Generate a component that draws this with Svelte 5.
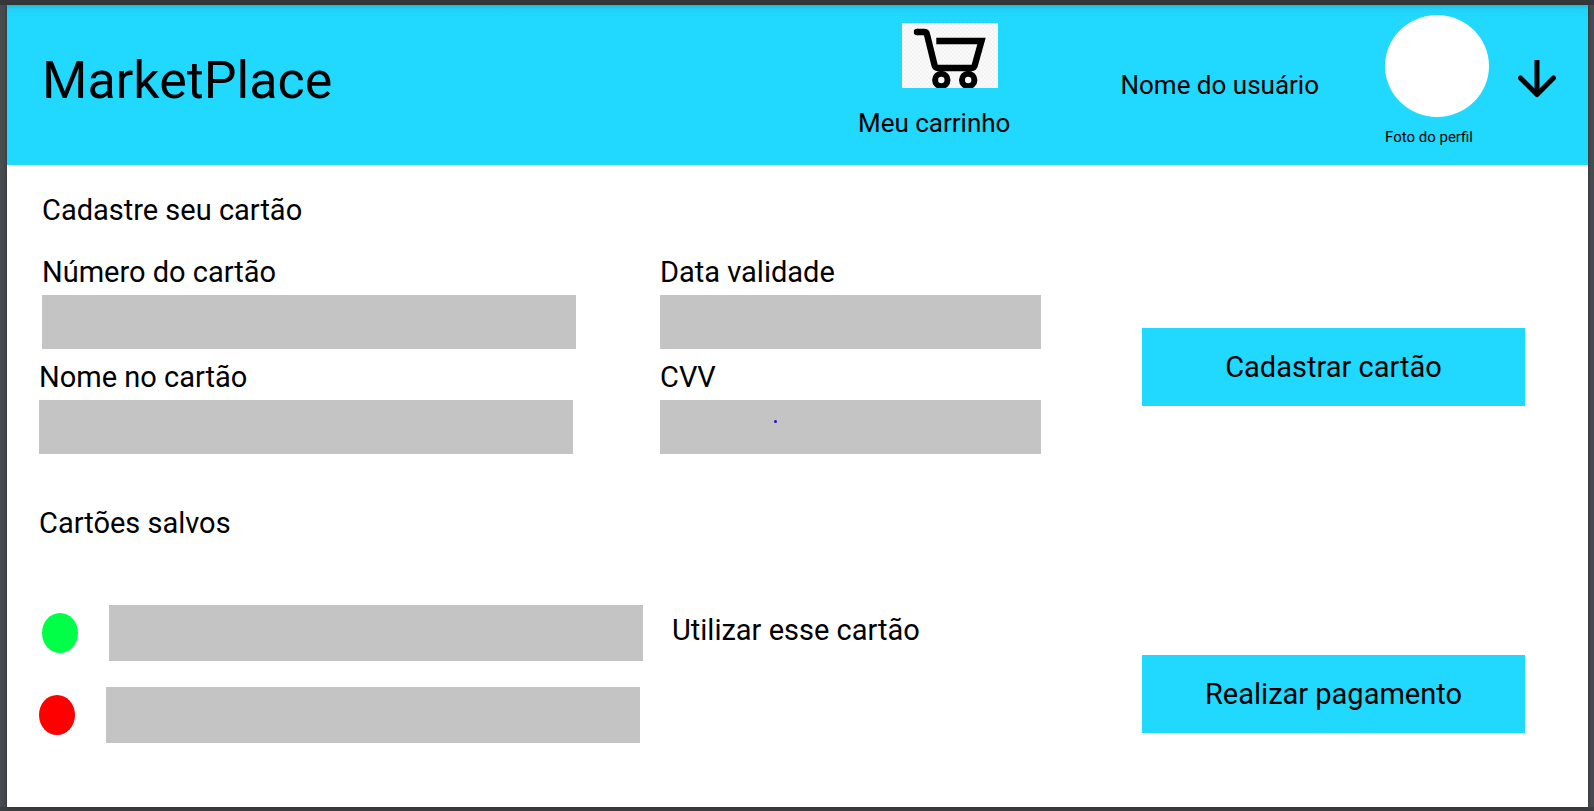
<script>
  let numero = $state('');
  let validade = $state('');
  let nome = $state('');
  let cvv = $state('');
  let selecionado = $state('principal');
</script>

<div class="page">
  <header>
    <h1>MarketPlace</h1>
    <a class="cart" href="#carrinho">
      <svg viewBox="0 0 96 65" aria-hidden="true">
        <defs>
          <pattern id="check" width="4" height="4" patternUnits="userSpaceOnUse">
            <rect width="4" height="4" fill="#fafafa" />
            <rect width="2" height="2" fill="#f3f3f3" />
            <rect x="2" y="2" width="2" height="2" fill="#f3f3f3" />
          </pattern>
        </defs>
        <rect width="96" height="65" fill="url(#check)" />
        <g fill="none" stroke="#000">
          <path d="M15 9H22Q24.500 9 25 11.500L32.500 42Q33.200 45 36 45H69.500Q72 45 72.700 42.500L79.500 18H34.300" stroke-width="6.400" />
          <circle cx="39.300" cy="57" r="6.200" stroke-width="6" />
          <circle cx="66.200" cy="57" r="6.200" stroke-width="6" />
        </g>
        <circle cx="15" cy="9" r="3.200" />
      </svg>
      <span>Meu carrinho</span>
    </a>
    <span class="user">Nome do usuário</span>
    <div class="profile">
      <div class="photo"></div>
      <span>Foto do perfil</span>
    </div>
    <button class="menu" type="button" aria-label="Abrir menu">
      <svg viewBox="0 0 38 38" aria-hidden="true">
        <path d="M19 0V34" fill="none" stroke="#000" stroke-width="5" />
        <path d="M2.500 18L19 34.500L35.500 18" fill="none" stroke="#000" stroke-width="5" stroke-linecap="round" stroke-linejoin="round" />
      </svg>
    </button>
  </header>

  <main>
    <h2 class="inset">Cadastre seu cartão</h2>
    <form class="register" onsubmit={(e) => e.preventDefault()}>
      <div class="fields wide">
        <div class="field inset">
          <label for="numero">Número do cartão</label>
          <input id="numero" bind:value={numero} />
        </div>
        <div class="field outset">
          <label for="nome">Nome no cartão</label>
          <input id="nome" bind:value={nome} />
        </div>
      </div>
      <div class="fields narrow">
        <div class="field">
          <label for="validade">Data validade</label>
          <input id="validade" bind:value={validade} />
        </div>
        <div class="field">
          <label for="cvv">CVV</label>
          <div class="marked">
            <input id="cvv" bind:value={cvv} />
            <span class="mark"></span>
          </div>
        </div>
      </div>
      <button class="action" type="submit">Cadastrar cartão</button>
    </form>

    <h2 class="saved-title">Cartões salvos</h2>
    <section class="saved">
      <div class="cards">
        <div class="card inset">
          <input class="green" type="radio" id="principal" value="principal" bind:group={selecionado} />
          <input class="plate" aria-label="Primeiro cartão salvo" readonly />
        </div>
        <div class="card outset">
          <input class="red" type="radio" value="reserva" aria-label="Segundo cartão" bind:group={selecionado} />
          <input class="plate" aria-label="Segundo cartão salvo" readonly />
        </div>
      </div>
      <label class="use" for="principal">Utilizar esse cartão</label>
      <button class="action pay" type="button">Realizar pagamento</button>
    </section>
  </main>
</div>

<style>
  :global(body) {
    margin: 0;
    background: #484c50;
  }
  :global(#app) {
    display: flow-root;
    border-top: 5px solid #36393c;
    border-bottom: 4px solid #3d4043;
  }
  .page {
    box-sizing: border-box;
    min-height: calc(100vh - 9px);
    margin: 0 6px 0 7px;
    background: #fff;
    box-shadow: 0 0 4px #2b2e31;
    color: #000;
    font-family: Roboto, sans-serif;
    font-size: 29px;
    line-height: 36px;
  }
  header {
    display: flex;
    align-items: flex-start;
    box-sizing: border-box;
    height: 160px;
    padding: 0 32px 0 35px;
    background: linear-gradient(#20bcd9, #21d3fa 5px, #21d8ff 12px);
  }
  h1 {
    margin: 46px auto 0 0;
    font-size: 52px;
    font-weight: 400;
    line-height: 60px;
  }
  h2 {
    margin: 0;
    font-size: 29px;
    font-weight: 400;
  }
  .cart {
    display: flex;
    flex-direction: column;
    align-items: flex-end;
    gap: 19px;
    margin: 18px 110px 0 0;
    color: inherit;
    font-size: 26px;
    line-height: 32px;
    text-decoration: none;
  }
  .cart svg {
    display: block;
    width: 96px;
    height: 65px;
    margin-right: 12px;
  }
  .user {
    margin: 64px 66px 0 0;
    font-size: 26px;
    line-height: 32px;
  }
  .profile {
    display: flex;
    flex-direction: column;
    gap: 10px;
    margin: 10px 29px 0 0;
    font-size: 15px;
    line-height: 20px;
  }
  .photo {
    width: 104px;
    height: 102px;
    border-radius: 50%;
    background: #fff;
  }
  .menu {
    margin: 55px 0 0;
    padding: 0;
    border: 0;
    background: none;
  }
  .menu svg {
    display: block;
    width: 38px;
    height: 38px;
  }
  main {
    padding: 27px 63px 24px 32px;
  }
  .inset {
    padding-left: 3px;
  }
  .outset {
    padding-right: 3px;
  }
  .register {
    display: grid;
    grid-template-columns: 621fr 482fr 383fr;
    align-items: start;
    margin-top: 26px;
  }
  .fields {
    display: grid;
    gap: 10px;
  }
  .wide {
    padding-right: 84px;
  }
  .narrow {
    padding-right: 101px;
  }
  .field {
    display: grid;
    gap: 5px;
  }
  .field input,
  .plate {
    box-sizing: border-box;
    width: 100%;
    min-width: 0;
    height: 54px;
    margin: 0;
    padding: 0 12px;
    border: 0;
    border-radius: 0;
    background: #c4c4c4;
    font: inherit;
  }
  .marked {
    position: relative;
    display: grid;
  }
  .mark {
    position: absolute;
    top: 20px;
    left: 30%;
    width: 3px;
    height: 3px;
    border-radius: 50%;
    background: #1a10d0;
  }
  .action {
    height: 78px;
    margin: 74px 0 0;
    padding: 0;
    border: 0;
    background: #21d8ff;
    color: inherit;
    font: inherit;
  }
  .saved-title {
    margin-top: 51px;
  }
  .saved {
    display: grid;
    grid-template-columns: 633fr 470fr 383fr;
    align-items: start;
    margin-top: 64px;
  }
  .cards {
    display: grid;
    gap: 26px;
    padding-right: 29px;
  }
  .card {
    display: flex;
    align-items: center;
    gap: 31px;
  }
  .card .plate {
    flex: 1;
    height: 56px;
  }
  .green,
  .red {
    appearance: none;
    flex: none;
    width: 36px;
    height: 40px;
    margin: 0;
    border-radius: 50%;
  }
  .green {
    background: #00ff47;
  }
  .red {
    background: #f00;
  }
  .use {
    padding-top: 7px;
  }
  .pay {
    margin-top: 50px;
  }
</style>
